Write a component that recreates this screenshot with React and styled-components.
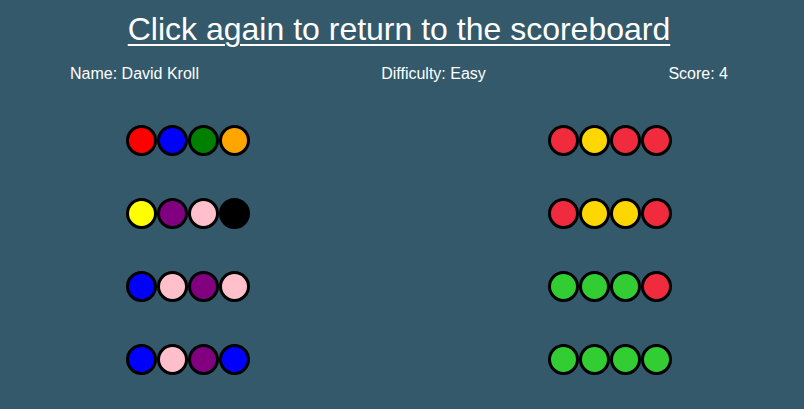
import styled, { createGlobalStyle } from "styled-components";

const GlobalStyle = createGlobalStyle`
  body {
    margin: 0;
    background-color: #34596b;
    font-family: "Liberation Sans", Arial, sans-serif;
    color: #ffffff;
  }
`;

const Page = styled.div`
  width: 804px;
  height: 409px;
  overflow: hidden;
`;

const Title = styled.a`
  display: block;
  margin: 11px 0 0;
  padding-right: 6px;
  text-align: center;
  font-size: 32px;
  line-height: 37px;
  color: #ffffff;
  text-decoration: underline;
  text-underline-offset: 4px;
  text-decoration-thickness: 2px;
  cursor: pointer;
`;

const Info = styled.div`
  display: grid;
  grid-template-columns: 308px 251px 1fr;
  margin-top: 17px;
  font-size: 16px;
  line-height: 18px;
`;

const Cell = styled.div`
  text-align: ${(p) => p.$align};
  padding-left: ${(p) => (p.$align === "left" ? "70px" : "0")};
  padding-right: ${(p) => (p.$align === "right" ? "76px" : "0")};
`;

const Board = styled.div`
  display: flex;
  flex-direction: column;
  gap: 42px;
  margin-top: 42px;
  padding-left: 126px;
`;

const Row = styled.div`
  display: flex;
  gap: 298px;
`;

const Pegs = styled.div`
  display: flex;
`;

const Peg = styled.span`
  width: 25px;
  height: 25px;
  border: 3px solid #000000;
  border-radius: 50%;
  background-color: ${(p) => p.$color};
`;

const colors = {
  red: "#ff0000",
  blue: "#0000ff",
  green: "#008000",
  orange: "#ffa500",
  yellow: "#ffff00",
  purple: "#800080",
  pink: "#ffc0cb",
  black: "#000000",
  hit: "#32cd32",
  near: "#ffd700",
  miss: "#ef2b3d",
};

const rounds = [
  { guess: ["red", "blue", "green", "orange"], result: ["miss", "near", "miss", "miss"] },
  { guess: ["yellow", "purple", "pink", "black"], result: ["miss", "near", "near", "miss"] },
  { guess: ["blue", "pink", "purple", "pink"], result: ["hit", "hit", "hit", "miss"] },
  { guess: ["blue", "pink", "purple", "blue"], result: ["hit", "hit", "hit", "hit"] },
];

export default function App() {
  return (
    <Page>
      <GlobalStyle />
      <Title>Click again to return to the scoreboard</Title>
      <Info>
        <Cell $align="left">Name: David Kroll</Cell>
        <Cell $align="center">Difficulty: Easy</Cell>
        <Cell $align="right">Score: 4</Cell>
      </Info>
      <Board>
        {rounds.map((round, i) => (
          <Row key={i}>
            <Pegs>
              {round.guess.map((c, j) => (
                <Peg key={j} $color={colors[c]} />
              ))}
            </Pegs>
            <Pegs>
              {round.result.map((c, j) => (
                <Peg key={j} $color={colors[c]} />
              ))}
            </Pegs>
          </Row>
        ))}
      </Board>
    </Page>
  );
}
